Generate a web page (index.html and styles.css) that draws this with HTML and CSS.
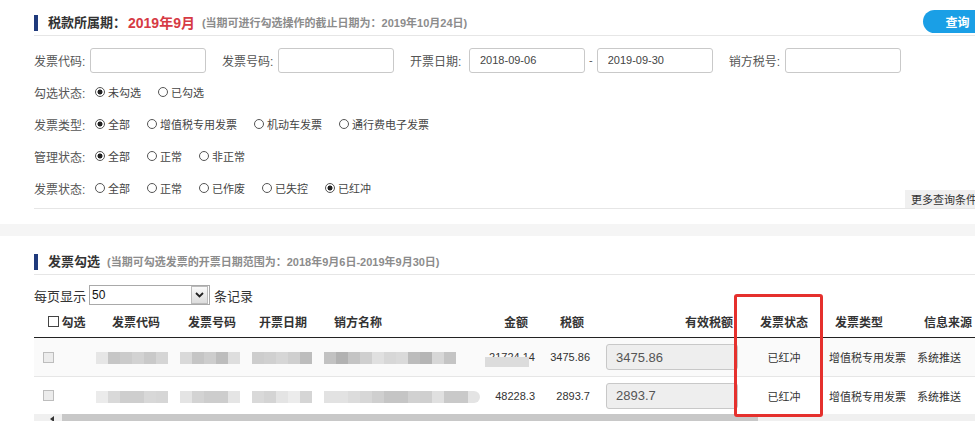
FILE: index.html
```html
<!DOCTYPE html>
<html lang="zh-CN">
<head>
    <meta charset="UTF-8">
    <meta name="viewport" content="width=device-width, initial-scale=1.0">
    <title>发票勾选</title>
    <link rel="stylesheet" href="styles.css">
</head>
<body>
    <!-- 查询条件 -->
    <section class="panel">
        <div class="panel-head">
            <h3 class="title"><span class="bar"></span>税款所属期：<span class="period">2019年9月</span><span class="note">(当期可进行勾选操作的截止日期为：2019年10月24日)</span></h3>
            <button class="btn-query">查询</button>
        </div>
        <div class="query-form">
            <div class="form-row">
                <span class="label">发票代码:</span><input class="text-input" type="text">
                <span class="label next">发票号码:</span><input class="text-input" type="text">
                <span class="label next wide">开票日期:</span><input class="text-input" type="text" value="2018-09-06"><span class="dash">-</span><input class="text-input" type="text" value="2019-09-30">
                <span class="label next">销方税号:</span><input class="text-input" type="text">
            </div>
            <div class="form-row">
                <span class="label">勾选状态:</span>
                <label class="opt"><input class="radio" type="radio" name="gx" checked>未勾选</label>
                <label class="opt"><input class="radio" type="radio" name="gx">已勾选</label>
            </div>
            <div class="form-row">
                <span class="label">发票类型:</span>
                <label class="opt"><input class="radio" type="radio" name="lx" checked>全部</label>
                <label class="opt"><input class="radio" type="radio" name="lx">增值税专用发票</label>
                <label class="opt"><input class="radio" type="radio" name="lx">机动车发票</label>
                <label class="opt"><input class="radio" type="radio" name="lx">通行费电子发票</label>
            </div>
            <div class="form-row">
                <span class="label">管理状态:</span>
                <label class="opt"><input class="radio" type="radio" name="gl" checked>全部</label>
                <label class="opt"><input class="radio" type="radio" name="gl">正常</label>
                <label class="opt"><input class="radio" type="radio" name="gl">非正常</label>
            </div>
            <div class="form-row">
                <span class="label">发票状态:</span>
                <label class="opt"><input class="radio" type="radio" name="zt">全部</label>
                <label class="opt"><input class="radio" type="radio" name="zt">正常</label>
                <label class="opt"><input class="radio" type="radio" name="zt">已作废</label>
                <label class="opt"><input class="radio" type="radio" name="zt">已失控</label>
                <label class="opt"><input class="radio" type="radio" name="zt" checked>已红冲</label>
            </div>
            <span class="more">更多查询条件</span>
        </div>
    </section>

    <div class="band"></div>

    <!-- 发票列表 -->
    <section class="panel list">
        <div class="panel-head">
            <h3 class="title"><span class="bar"></span>发票勾选<span class="note">(当期可勾选发票的开票日期范围为：2018年9月6日-2019年9月30日)</span></h3>
        </div>
        <div class="toolbar">
            每页显示
            <div class="select"><span class="select-value">50</span><span class="select-arrow"><svg width="9" height="6" viewBox="0 0 9 6"><path d="M1 1 L4.5 4.5 L8 1" fill="none" stroke="#222" stroke-width="1.8"/></svg></span></div>
            条记录
        </div>
        <div class="grid">
            <div class="grid-row head">
                <div class="col-chk"><span class="head-box"></span>勾选</div>
                <div class="col-code">发票代码</div>
                <div class="col-no">发票号码</div>
                <div class="col-date">开票日期</div>
                <div class="col-name">销方名称</div>
                <div class="col-amt">金额</div>
                <div class="col-tax">税额</div>
                <div class="col-valid">有效税额</div>
                <div class="col-state">发票状态</div>
                <div class="col-type">发票类型</div>
                <div class="col-src">信息来源</div>
            </div>
            <div class="grid-row item odd">
                <div class="col-chk"><span class="chk"></span></div>
                <div class="col-code"><span class="blur mosaic-a"></span></div>
                <div class="col-no"><span class="blur mosaic-b"></span></div>
                <div class="col-date"><span class="blur mosaic-c"></span></div>
                <div class="col-name"><span class="blur mosaic-d"></span></div>
                <div class="col-amt"><span class="hidden-num">21724.14</span></div>
                <div class="col-tax">3475.86</div>
                <div class="col-valid"><input class="valid-input" type="text" value="3475.86" readonly></div>
                <div class="col-state">已红冲</div>
                <div class="col-type">增值税专用发票</div>
                <div class="col-src">系统推送</div>
            </div>
            <div class="grid-row item">
                <div class="col-chk"><span class="chk"></span></div>
                <div class="col-code"><span class="blur mosaic-e"></span></div>
                <div class="col-no"><span class="blur mosaic-f"></span></div>
                <div class="col-date"><span class="blur mosaic-g"></span></div>
                <div class="col-name"><span class="blur mosaic-h"></span></div>
                <div class="col-amt">48228.3</div>
                <div class="col-tax">2893.7</div>
                <div class="col-valid"><input class="valid-input" type="text" value="2893.7" readonly></div>
                <div class="col-state">已红冲</div>
                <div class="col-type">增值税专用发票</div>
                <div class="col-src">系统推送</div>
            </div>
        </div>
        <div class="hscroll">
            <span class="hscroll-arrow"></span>
            <span class="hscroll-thumb"></span>
        </div>
    </section>

    <div class="mark"></div>
</body>
</html>
```

FILE: styles.css
```css
html, body {
    margin: 0;
    padding: 0;
    overflow: hidden;
}

body {
    font-family: "Liberation Sans", "Noto Sans CJK SC", sans-serif;
    font-size: 12px;
    color: #333;
    background-color: #fff;
    width: 992px;
}

.panel {
    padding-left: 34px;
}

.panel-head {
    display: flex;
    align-items: center;
    justify-content: space-between;
    height: 25px;
    padding-top: 10px;
    border-bottom: 1px solid #e6e6e6;
}

.title {
    display: flex;
    align-items: center;
    margin: 0;
    font-size: 13px;
    font-weight: bold;
    color: #333;
    line-height: 20px;
}

.bar {
    width: 4px;
    height: 16px;
    margin-right: 10px;
    background-color: #1f3a7c;
}

.period {
    margin-left: 2px;
    font-size: 14px;
    color: #d63a44;
}

.note {
    margin-left: 7px;
    font-size: 11px;
    color: #8c8c8c;
}

.btn-query {
    width: 69px;
    height: 23px;
    margin-top: -2px;
    padding: 0;
    border: none;
    border-radius: 12px 0 0 12px;
    background-color: #1a9fe6;
    color: #fff;
    font-family: inherit;
    font-size: 12px;
    font-weight: bold;
}

/* query form */
.query-form {
    position: relative;
    padding: 8px 0 4px;
    border-bottom: 1px solid #e6e6e6;
}

.form-row {
    display: flex;
    align-items: center;
    height: 32px;
    color: #555;
}

.label {
    width: 56px;
    flex: none;
    font-size: 12px;
    color: #555;
}

.label.next {
    margin-left: 16px;
}

.label.wide {
    width: 59px;
}

.text-input {
    width: 116px;
    height: 25px;
    box-sizing: border-box;
    padding: 0 10px;
    border: 1px solid #c9c9c9;
    border-radius: 3px;
    font-family: inherit;
    font-size: 11px;
    color: #444;
    outline: none;
}

.dash {
    margin: 0 4px;
    font-size: 11px;
    color: #555;
}

.opt {
    display: flex;
    align-items: center;
    margin-right: 17px;
    font-size: 11px;
    color: #444;
}

.form-row .label + .opt {
    margin-left: 5px;
}

.radio {
    appearance: none;
    -webkit-appearance: none;
    width: 10px;
    height: 10px;
    margin: 0 3px 0 0;
    border: 1px solid #555;
    border-radius: 50%;
    background-color: #fff;
}

.radio:checked {
    background: radial-gradient(circle, #222 0 2.2px, #fff 2.8px);
}

.more {
    position: absolute;
    right: 9px;
    bottom: 0;
    height: 18px;
    padding: 0 6px;
    background-color: #f0f0f0;
    font-size: 11px;
    line-height: 20px;
    color: #333;
}

.band {
    height: 12px;
    margin-top: 15px;
    background-color: #f5f5f5;
}

/* list */
.list .panel-head {
    padding-top: 13px;
}

.toolbar {
    display: flex;
    align-items: center;
    height: 20px;
    padding-top: 10px;
    font-size: 13px;
    color: #333;
}

.select {
    display: flex;
    align-items: center;
    justify-content: space-between;
    width: 121px;
    height: 20px;
    box-sizing: border-box;
    margin: 0 4px 0 3px;
    padding: 0 1px 0 2px;
    border: 1px solid #a9a9a9;
    background-color: #fff;
}

.select-value {
    font-size: 12px;
    color: #111;
}

.select-arrow {
    display: flex;
    align-items: center;
    justify-content: center;
    width: 15px;
    height: 16px;
    border: 1px solid #bbb;
    background: linear-gradient(#fafafa, #dcdcdc);
}

.grid {
    width: 956px;
}

.grid-row {
    display: grid;
    grid-template-columns: 62px 80px 72px 70px 166px 54px 60px 147px 78px 87px 80px;
    align-items: center;
}

.grid-row.head {
    height: 33px;
    box-sizing: border-box;
    border-bottom: 1px solid #222;
    font-weight: bold;
    font-size: 12px;
    color: #333;
}

.grid-row.item {
    height: 37px;
    font-size: 11px;
    color: #333;
}

.grid-row.odd {
    height: 39px;
    box-sizing: border-box;
    border-bottom: 1px solid #e6e6e6;
    background-color: #fafafa;
}

.col-chk, .col-code, .col-no, .col-date, .col-state {
    text-align: center;
}

.head .col-chk {
    display: flex;
    align-items: center;
    justify-content: center;
    padding-left: 4px;
}

.head-box {
    width: 9px;
    height: 9px;
    margin-right: 2px;
    border: 1px solid #444;
}

.item .col-chk {
    text-align: left;
    padding-left: 9px;
}

.chk {
    display: block;
    width: 9px;
    height: 9px;
    border: 1px solid #bdbdbd;
    background-color: #ececec;
}

.col-name {
    padding-left: 16px;
}

.item .col-name {
    padding-left: 6px;
}

.col-amt {
    text-align: right;
    padding-right: 10px;
}

.item .col-amt {
    padding-right: 3px;
}

.col-tax {
    text-align: right;
    padding-right: 14px;
}

.item .col-tax {
    padding-right: 8px;
}

.col-valid {
    text-align: right;
    padding-right: 12px;
}

.item .col-valid {
    text-align: left;
    padding: 0 0 0 8px;
}

.valid-input {
    width: 132px;
    height: 26px;
    box-sizing: border-box;
    padding: 0 9px;
    border: 1px solid #c8c8c8;
    border-radius: 3px;
    background-color: #eee;
    font-family: inherit;
    font-size: 13px;
    color: #555;
    outline: none;
}

.col-type {
    padding-left: 12px;
}

.item .col-type {
    padding-left: 6px;
}

.col-src {
    padding-left: 14px;
}

.item .col-src {
    padding-left: 7px;
}

/* mosaic over private data */
.blur {
    display: block;
    height: 12px;
    margin-top: 2px;
}

.item .col-code .blur {
    width: 72px;
    margin-left: 0;
}

.item .col-no .blur,
.item .col-date .blur {
    width: 60px;
    margin-left: 4px;
}

.mosaic-a { background: linear-gradient(90deg, #e6e6e6 0 12px, #c6c6c6 12px 24px, #cbcbcb 24px 36px, #d2d2d2 36px 48px, #c9c9c9 48px 60px, #d5d5d5 60px 72px); }
.mosaic-b { background: linear-gradient(90deg, #d9d9d9 0 12px, #c5c5c5 12px 24px, #cdcdcd 24px 36px, #bdbdbd 36px 48px, #dedede 48px 60px); }
.mosaic-c { background: linear-gradient(90deg, #cdcdcd 0 12px, #d0d0d0 12px 24px, #d6d6d6 24px 36px, #cfcfcf 36px 48px, #bdbdbd 48px 60px); }
.mosaic-d { width: 132px; background: linear-gradient(90deg, #c2c2c2 0 12px, #b2b2b2 12px 24px, #c4c4c4 24px 36px, #cfcfcf 36px 48px, #e0e0e0 48px 60px, #d7d7d7 60px 72px, #dadada 72px 84px, #bcbcbc 84px 96px, #b5b5b5 96px 108px, #d7d7d7 108px 120px, #c4c4c4 120px 132px); }
.mosaic-e { background: linear-gradient(90deg, #ebebeb 0 12px, #d9d9d9 12px 24px, #cecece 24px 48px, #d8d8d8 48px 60px, #d6d6d6 60px 72px); }
.mosaic-f { background: linear-gradient(90deg, #e4e4e4 0 12px, #d3d3d3 12px 24px, #cdcdcd 24px 48px, #e5e5e5 48px 60px); }
.mosaic-g { background: linear-gradient(90deg, #d9d9d9 0 12px, #d4d4d4 12px 24px, #e4e4e4 24px 36px, #ececec 36px 48px, #d5d5d5 48px 60px); }
.mosaic-h { width: 156px; border-radius: 0 8px 8px 0; background: linear-gradient(90deg, #e2e2e2 0 24px, #dcdcdc 24px 36px, #d7d7d7 36px 48px, #cfcfcf 48px 60px, #c5c5c5 60px 84px, #d1d1d1 84px 96px, #cfcfcf 96px 108px, #e0e0e0 108px 120px, #c9c9c9 120px 144px, #e4e4e4 144px 156px); }

.hidden-num {
    position: relative;
    display: inline-block;
    margin-top: -4px;
}

.hidden-num::after {
    content: "";
    position: absolute;
    left: -4px;
    right: 6px;
    top: 6px;
    height: 10px;
    background-color: #dcdcdc;
}

.hscroll {
    display: flex;
    height: 8px;
    background-color: #f0f0f0;
}

.hscroll-arrow {
    width: 28px;
    position: relative;
}

.hscroll-arrow::after {
    content: "";
    position: absolute;
    left: 16px;
    top: 2px;
    border-right: 4px solid #333;
    border-top: 3px solid transparent;
    border-bottom: 3px solid transparent;
}

.hscroll-thumb {
    width: 696px;
    background-color: #c8c8c8;
}

.mark {
    position: absolute;
    left: 734px;
    top: 294px;
    width: 89px;
    height: 123px;
    box-sizing: border-box;
    border: 3px solid #e5302d;
    border-radius: 3px;
}
```
